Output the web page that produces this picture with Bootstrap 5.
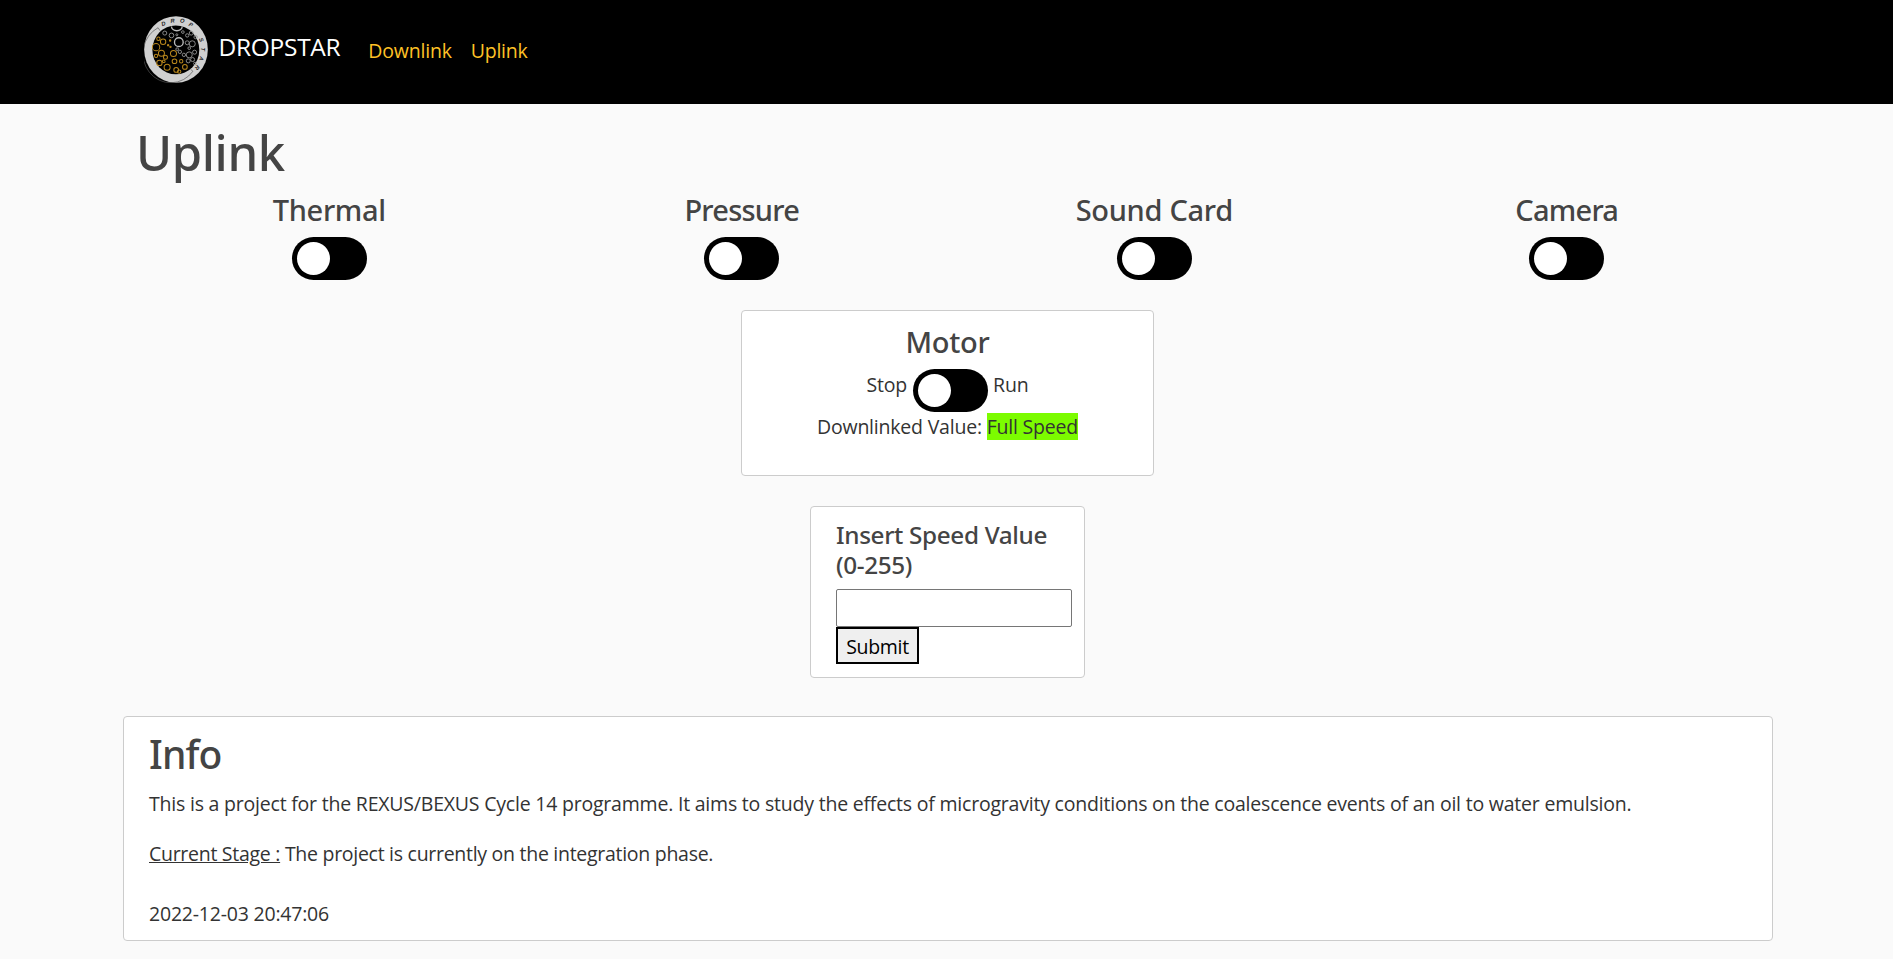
<!DOCTYPE html>
<html lang="en">
<head>
<meta charset="utf-8">
<title>DROPSTAR - Uplink</title>
<meta name="viewport" content="width=device-width, initial-scale=1">
<link href="https://cdn.jsdelivr.net/npm/bootstrap@5.3.0/dist/css/bootstrap.min.css" rel="stylesheet">
<style>
body{background:#fafafa;color:#333;font-family:"Open Sans",sans-serif;font-size:19.5px;line-height:30px;letter-spacing:-.21px;overflow:hidden}
h1,h2,h4,h5{font-family:"Noto Sans",sans-serif;font-weight:500;color:#444}
h1{font-size:49px;line-height:60px;letter-spacing:-.4px;padding:18px 0 0 13px}
h2{font-size:39px;line-height:48px;letter-spacing:-.9px;margin-bottom:11px}
h4{font-size:29px;line-height:36px;letter-spacing:-.3px;margin-bottom:9px}
h5{font-size:24.3px;line-height:30px;letter-spacing:-.35px;margin-bottom:9px}
.tight{letter-spacing:-.75px}
.site-width{width:1650px;margin-left:123px}
.site-bar{height:104px;padding:16px 0 0 21px}
.navbar-brand{font-size:24.5px;line-height:38px;color:#fff!important;letter-spacing:-.3px;margin:0 28px 0 10.5px;padding:12px 0 0}
.navbar-nav .nav-link{color:#ffc226;padding:20px 0 0;line-height:30px;margin-right:19px}
.switches{padding-top:10px}
.switch-pill{display:inline-block;width:75px;height:43px;border-radius:22px;background:#000;padding:5px;vertical-align:top}
.switch-pill::before{content:"";display:block;width:33px;height:33px;border-radius:50%;background:#fff}
.panel{background:#fff;border:1px solid #ccc;border-radius:4px}
.motor-panel{width:413px;height:166px;padding-top:13px;margin:30px 0 0 618px}
.motor-row{height:43px;gap:5.5px}
.motor-label{padding-top:1px}
.speed-panel{width:275px;height:172px;margin:30px 0 0 687px;padding:13px 0 0 25px}
.speed-panel input{width:236px;height:38px;border:1px solid #767676;border-radius:2px;display:block}
.speed-panel button{width:83px;height:37px;border:2px solid #000;background:#efefef;color:#000;padding:2px 0 0;letter-spacing:-.3px;line-height:30px;display:block}
.info-panel{height:225px;padding:13px 25px 0;margin-top:38px}
.lead-line{margin-bottom:20px}
.stage-line{margin-bottom:30px;letter-spacing:-.28px}
.full{background:#7cfc00}
</style>
</head>
<body>
<header class="bg-black">
  <nav class="site-width site-bar navbar-nav d-flex flex-row align-items-start">
    <svg width="64" height="67" viewBox="0 0 191 200" preserveAspectRatio="none" aria-hidden="true">
      <ellipse cx="95.500" cy="100" rx="95" ry="99.500" fill="#d0d0d0"/>
      <ellipse cx="95" cy="101" rx="70" ry="73" fill="#000"/>
      <path d="M48 44 L42 35 A83 87 0 1 0 146 165 L139 159" fill="none" stroke="#555" stroke-width="2"/>
      <g fill="none" stroke="#b8861c" stroke-width="3">
        <circle cx="57" cy="77" r="8"/><circle cx="36" cy="93" r="11"/><circle cx="52" cy="111" r="9"/><circle cx="88" cy="112" r="9"/>
        <circle cx="64" cy="123" r="6"/><circle cx="46" cy="140" r="8"/><circle cx="69" cy="153" r="9"/><circle cx="91" cy="135" r="7"/>
        <circle cx="96" cy="161" r="7"/><circle cx="111" cy="135" r="5"/><circle cx="122" cy="152" r="7"/><circle cx="105" cy="166" r="5"/>
        <circle cx="43" cy="68" r="5"/><circle cx="36" cy="119" r="5"/><circle cx="72" cy="87" r="2"/><circle cx="78" cy="73" r="2"/>
        <circle cx="79" cy="92" r="2"/><circle cx="59" cy="135" r="4"/>
      </g>
      <g fill="none" stroke="#999" stroke-width="2.600">
        <path d="M82 31 A16 13 0 0 0 114 31" stroke="#bbb" stroke-width="4"/>
        <circle cx="104" cy="78" r="13" stroke="#bbb" stroke-width="4"/><circle cx="144" cy="83" r="9"/><circle cx="135" cy="116" r="9"/><circle cx="129" cy="80" r="6"/>
        <circle cx="82" cy="58" r="7"/><circle cx="62" cy="51" r="6"/><circle cx="129" cy="58" r="5"/><circle cx="116" cy="48" r="4"/>
        <circle cx="141" cy="51" r="6"/><circle cx="154" cy="63" r="5"/><circle cx="107" cy="107" r="5"/><circle cx="119" cy="116" r="5"/>
        <circle cx="151" cy="108" r="6"/><circle cx="132" cy="134" r="6"/><circle cx="145" cy="130" r="6"/><circle cx="99" cy="99" r="4"/>
        <circle cx="98" cy="56" r="3"/><circle cx="152" cy="142" r="4"/><circle cx="135" cy="96" r="4"/>
      </g>
      <g fill="#222" font-family="Liberation Sans" font-weight="bold" font-style="italic" font-size="17" text-anchor="middle" letter-spacing="0">
        <text transform="translate(58 23) rotate(-22)" y="6">D</text><text transform="translate(85 14) rotate(-8)" y="6">R</text>
        <text transform="translate(114 14) rotate(10)" y="6">O</text><text transform="translate(140 26) rotate(28)" y="6">P</text>
        <text transform="translate(171 71) rotate(68)" y="6">S</text><text transform="translate(177 99) rotate(90)" y="6">T</text>
        <text transform="translate(172 127) rotate(108)" y="6">A</text><text transform="translate(159 154) rotate(128)" y="6">R</text>
      </g>
    </svg>
    <a class="navbar-brand" href="#">DROPSTAR</a>
    <a class="nav-link" href="#">Downlink</a>
    <a class="nav-link" href="#">Uplink</a>
  </nav>
</header>
<main class="site-width">
  <h1 class="mb-0">Uplink</h1>
  <div class="row g-0 text-center switches">
    <div class="col-3"><h4>Thermal</h4><span class="switch-pill"></span></div>
    <div class="col-3"><h4 class="tight">Pressure</h4><span class="switch-pill"></span></div>
    <div class="col-3"><h4>Sound Card</h4><span class="switch-pill"></span></div>
    <div class="col-3"><h4 class="tight">Camera</h4><span class="switch-pill"></span></div>
  </div>
  <section class="panel motor-panel text-center">
    <h4>Motor</h4>
    <div class="motor-row d-flex justify-content-center"><span class="motor-label">Stop</span><span class="switch-pill"></span><span class="motor-label">Run</span></div>
    <div>Downlinked Value: <span class="full">Full Speed</span></div>
  </section>
  <section class="panel speed-panel">
    <h5>Insert Speed Value<br>(0-255)</h5>
    <input type="text" aria-label="Speed"><button type="submit">Submit</button>
  </section>
  <section class="panel info-panel">
    <h2>Info</h2>
    <p class="lead-line">This is a project for the REXUS/BEXUS Cycle 14 programme. It aims to study the effects of microgravity conditions on the coalescence events of an oil to water emulsion.</p>
    <p class="stage-line"><u>Current Stage :</u> The project is currently on the integration phase.</p>
    <p class="mb-0">2022-12-03 20:47:06</p>
  </section>
</main>
<script src="https://cdn.jsdelivr.net/npm/bootstrap@5.3.0/dist/js/bootstrap.bundle.min.js"></script>
</body>
</html>
